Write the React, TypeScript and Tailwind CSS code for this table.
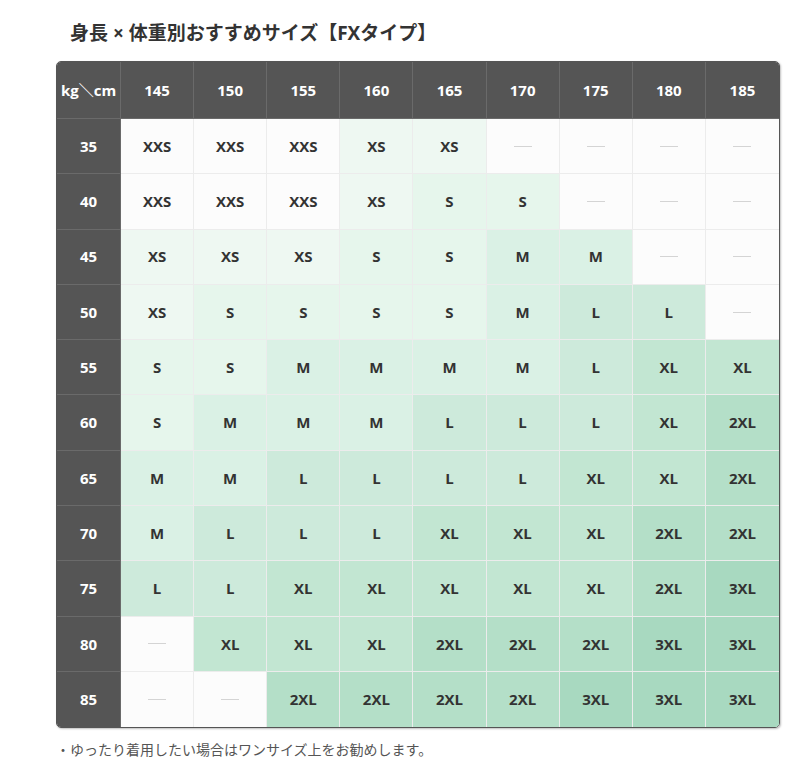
const heights = [145, 150, 155, 160, 165, 170, 175, 180, 185];

const rows: { kg: number; sizes: string[] }[] = [
  { kg: 35, sizes: ["XXS", "XXS", "XXS", "XS", "XS", "-", "-", "-", "-"] },
  { kg: 40, sizes: ["XXS", "XXS", "XXS", "XS", "S", "S", "-", "-", "-"] },
  { kg: 45, sizes: ["XS", "XS", "XS", "S", "S", "M", "M", "-", "-"] },
  { kg: 50, sizes: ["XS", "S", "S", "S", "S", "M", "L", "L", "-"] },
  { kg: 55, sizes: ["S", "S", "M", "M", "M", "M", "L", "XL", "XL"] },
  { kg: 60, sizes: ["S", "M", "M", "M", "L", "L", "L", "XL", "2XL"] },
  { kg: 65, sizes: ["M", "M", "L", "L", "L", "L", "XL", "XL", "2XL"] },
  { kg: 70, sizes: ["M", "L", "L", "L", "XL", "XL", "XL", "2XL", "2XL"] },
  { kg: 75, sizes: ["L", "L", "XL", "XL", "XL", "XL", "XL", "2XL", "3XL"] },
  { kg: 80, sizes: ["-", "XL", "XL", "XL", "2XL", "2XL", "2XL", "3XL", "3XL"] },
  { kg: 85, sizes: ["-", "-", "2XL", "2XL", "2XL", "2XL", "3XL", "3XL", "3XL"] },
];

// cell shade by size
const tone: Record<string, string> = {
  "-": "bg-[#fcfcfc]",
  XXS: "bg-[#fcfcfc]",
  XS: "bg-[#eef8f2]",
  S: "bg-[#e6f6ec]",
  M: "bg-[#daf1e5]",
  L: "bg-[#cdeadb]",
  XL: "bg-[#c2e6d2]",
  "2XL": "bg-[#b4dfc8]",
  "3XL": "bg-[#a8d9c0]",
};

function SizeCell({ size, lastCol, lastRow }: { size: string; lastCol: boolean; lastRow: boolean }) {
  return (
    <div
      className={`flex h-[55.3px] items-center justify-center border-[#ececec] ${tone[size]} ${
        lastCol ? "" : "border-r"
      } ${lastRow ? "" : "border-b"}`}
    >
      {size === "-" ? (
        <span className="block h-px w-[18px] bg-[#d4d4d4]" />
      ) : (
        <span className="text-[15px] font-bold text-[#333]">{size}</span>
      )}
    </div>
  );
}

export default function App() {
  return (
    <div
      className="bg-white pt-[21px] pl-[56px] pr-[30px] pb-[14px] text-[#333]"
      style={{ fontFamily: '"Open Sans", "Noto Sans CJK JP", sans-serif' }}
    >
      <h2 className="pl-[14px] text-[19px] leading-[25px] font-bold text-[#333]">
        身長 × 体重別おすすめサイズ【FXタイプ】
      </h2>

      <div className="mt-[15px] overflow-hidden rounded-[5px] border border-[#555] shadow-[1px_1px_2px_rgba(0,0,0,0.25)]">
        <div className="grid grid-cols-[64px_repeat(9,minmax(0,1fr))]">
          <div className="flex h-[57px] items-center justify-center border-r border-b border-[#6a6a6a] bg-[#555] text-[15px] font-bold text-white">
            kg<span className="font-black">＼</span>cm
          </div>
          {heights.map((h, i) => (
            <div
              key={h}
              className={`flex h-[57px] items-center justify-center border-b border-[#6a6a6a] bg-[#555] text-[15px] font-bold text-white ${
                i === heights.length - 1 ? "" : "border-r"
              }`}
            >
              {h}
            </div>
          ))}

          {rows.map((row, r) => (
            <div key={row.kg} className="contents">
              <div
                className={`flex h-[55.3px] items-center justify-center border-r border-[#6a6a6a] bg-[#555] text-[15px] font-bold text-white ${
                  r === rows.length - 1 ? "" : "border-b"
                }`}
              >
                {row.kg}
              </div>
              {row.sizes.map((s, c) => (
                <SizeCell
                  key={c}
                  size={s}
                  lastCol={c === row.sizes.length - 1}
                  lastRow={r === rows.length - 1}
                />
              ))}
            </div>
          ))}
        </div>
      </div>

      <p className="mt-[12px] text-[14px] leading-[20px] text-[#555]">
        ・ゆったり着用したい場合はワンサイズ上をお勧めします。
      </p>
    </div>
  );
}
